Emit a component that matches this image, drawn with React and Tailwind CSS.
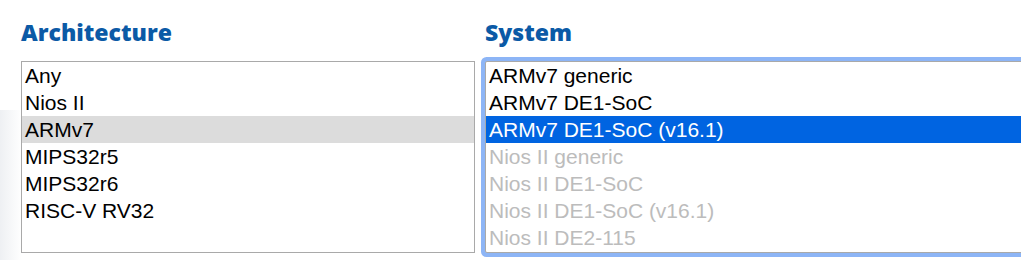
const archs = ["Any", "Nios II", "ARMv7", "MIPS32r5", "MIPS32r6", "RISC-V RV32"];

const systems = [
  { name: "ARMv7 generic" },
  { name: "ARMv7 DE1-SoC" },
  { name: "ARMv7 DE1-SoC (v16.1)", selected: true },
  { name: "Nios II generic", disabled: true },
  { name: "Nios II DE1-SoC", disabled: true },
  { name: "Nios II DE1-SoC (v16.1)", disabled: true },
  { name: "Nios II DE2-115", disabled: true },
];

function Heading({ children }) {
  return (
    <h2 className="h-[22px] leading-[22px] text-[23px] font-extrabold text-[#0b5aa6] font-['Open_Sans',sans-serif] mb-[18px]">
      {children}
    </h2>
  );
}

export default function App() {
  return (
    <div className="relative w-[1021px] h-[260px] overflow-hidden bg-white">
      <div className="absolute left-0 top-[110px] w-[22px] h-[150px] bg-gradient-to-r from-[#eef0f3] to-transparent" />
      <div className="relative flex pl-[21px] pt-[21px] font-['Liberation_Sans',Arial,sans-serif] text-[21px]">
        <div className="w-[454px] shrink-0">
          <Heading>Architecture</Heading>
          <ul className="h-[192px] border border-[#a9a9a9] bg-white">
            {archs.map((a) => (
              <li
                key={a}
                className={`h-[27px] leading-[27px] pl-[3px] text-black ${a === "ARMv7" ? "bg-[#dcdcdc]" : ""}`}
              >
                {a}
              </li>
            ))}
          </ul>
        </div>

        <div className="w-[580px] shrink-0 ml-[10px]">
          <Heading>System</Heading>
          <ul className="h-[192px] border border-[#a9a9a9] bg-white rounded-[2px] ring-4 ring-[#8db5f6]">
            {systems.map((s) => (
              <li
                key={s.name}
                className={`h-[27px] leading-[27px] pl-[3px] ${
                  s.selected
                    ? "bg-[#0064e1] text-white"
                    : s.disabled
                    ? "text-[#bcbcbc]"
                    : "text-black"
                }`}
              >
                {s.name}
              </li>
            ))}
          </ul>
        </div>
      </div>
    </div>
  );
}
